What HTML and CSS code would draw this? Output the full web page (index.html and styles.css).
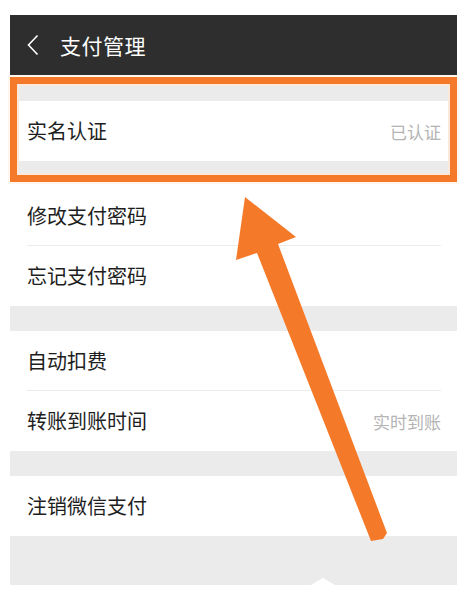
FILE: index.html
```html
<!DOCTYPE html>
<html lang="zh-CN">
<head>
<meta charset="utf-8">
<title>支付管理</title>
<link rel="stylesheet" href="styles.css">
</head>
<body>
<div class="screen">
  <header class="topbar">
    <svg class="back" width="14" height="22" viewBox="0 0 14 22"><polyline points="11.5,1.5 2.5,11 11.5,20.5" fill="none" stroke="#fff" stroke-width="1.6"/></svg>
    <span class="title">支付管理</span>
  </header>
  <div class="gap gap-top"></div>
  <div class="row"><span class="label">实名认证</span><span class="value">已认证</span></div>
  <div class="gap"></div>
  <div class="row sep"><span class="label">修改支付密码</span></div>
  <div class="row"><span class="label">忘记支付密码</span></div>
  <div class="gap"></div>
  <div class="row sep"><span class="label">自动扣费</span></div>
  <div class="row"><span class="label">转账到账时间</span><span class="value">实时到账</span></div>
  <div class="gap"></div>
  <div class="row"><span class="label">注销微信支付</span></div>
  <div class="gap gap-bottom"></div>
  <div class="highlight"></div>
</div>
<svg class="arrow" width="468" height="598" viewBox="0 0 468 598">
  <polygon points="245,197 296,237 278,244 387,533 383,539 371,541 257,253 236,260" fill="#f47a2a"/>
</svg>
</body>
</html>
```

FILE: styles.css
```css
* { box-sizing: border-box; }
html, body { margin: 0; padding: 0; background: #ffffff; }
body {
  width: 468px;
  height: 598px;
  position: relative;
  overflow: hidden;
  font-family: "Noto Sans CJK SC", "Noto Sans", sans-serif;
}
.screen {
  position: relative;
  margin: 15px 11px 0 10px;
  width: 447px;
  display: flex;
  flex-direction: column;
}
.topbar {
  height: 60px;
  background: #2e2e2e;
  display: flex;
  align-items: center;
  padding-left: 16px;
}
.back { display: block; margin-right: 20px; }
.title {
  color: #ffffff;
  font-size: 21px;
  line-height: 1;
  letter-spacing: 0.5px;
}
.gap { height: 25px; background: #ebebeb; }
.gap-top { height: 26px; }
.gap-bottom { height: 49px; position: relative; }
.gap-bottom::after {
  content: "";
  position: absolute;
  left: 301px;
  bottom: 0;
  width: 0;
  height: 0;
  border-left: 12px solid transparent;
  border-right: 12px solid transparent;
  border-bottom: 7px solid #ffffff;
}
.row {
  height: 60px;
  background: #ffffff;
  display: flex;
  align-items: center;
  justify-content: space-between;
  padding: 0 16px 0 17px;
  position: relative;
}
.row.sep::after {
  content: "";
  position: absolute;
  left: 17px;
  right: 16px;
  bottom: 0;
  height: 1px;
  background: #ececec;
}
.label { font-size: 20px; color: #1e1e1e; line-height: 1; }
.value { font-size: 17px; color: #b4b4b4; line-height: 1; }
.highlight {
  position: absolute;
  left: 0;
  top: 62px;
  width: 447px;
  height: 105px;
  border: 7px solid #f47a2a;
  box-shadow: 0 0 0 2px #fff6ee, 0 5px 0 0 #ffffff, inset 0 0 0 2px #fbe9dc;
}
.arrow {
  position: absolute;
  left: 0;
  top: 0;
  pointer-events: none;
}
```
